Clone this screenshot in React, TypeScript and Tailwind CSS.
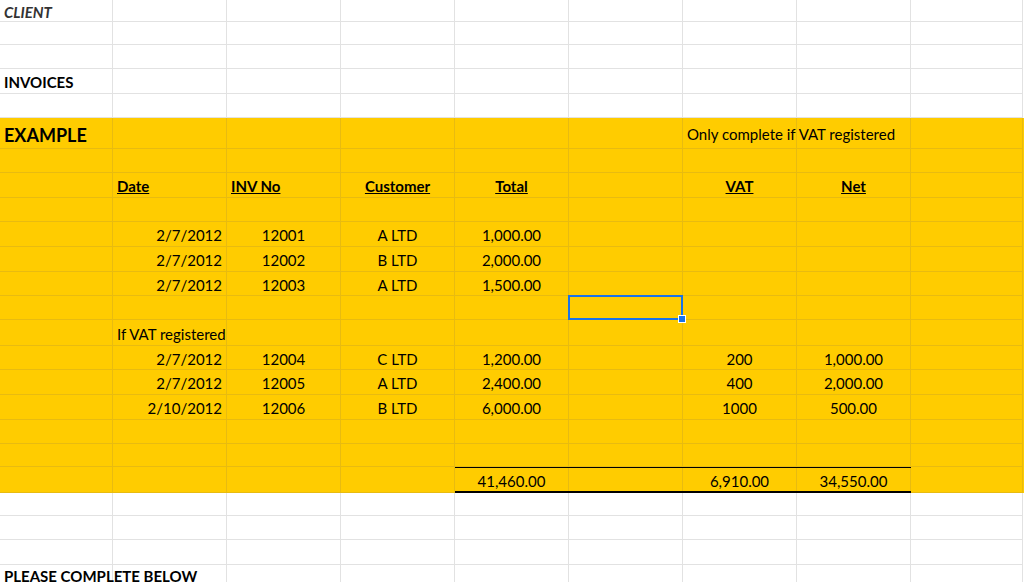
import React from "react";

type Cell = { t?: string; a?: "l" | "c" | "r"; cls?: string };
type Row = { h: number; y?: boolean; cells?: Record<number, Cell>; top?: boolean; bottom?: boolean; sel?: boolean };

const hdr = "font-bold underline";

const rows: Row[] = [
  { h: 22, cells: { 0: { t: "CLIENT", cls: "font-bold italic text-[#333]" } } },
  { h: 23 },
  { h: 24 },
  { h: 25, cells: { 0: { t: "INVOICES", cls: "font-bold" } } },
  { h: 24 },
  { h: 31, y: true, cells: { 0: { t: "EXAMPLE", cls: "font-bold text-[18px]" }, 6: { t: "Only complete if VAT registered" } } },
  { h: 24, y: true },
  { h: 25, y: true, cells: { 1: { t: "Date", cls: hdr }, 2: { t: "INV No", cls: hdr }, 3: { t: "Customer", a: "c", cls: hdr }, 4: { t: "Total", a: "c", cls: hdr }, 6: { t: "VAT", a: "c", cls: hdr }, 7: { t: "Net", a: "c", cls: hdr } } },
  { h: 24, y: true },
  { h: 25, y: true, cells: { 1: { t: "2/7/2012", a: "r" }, 2: { t: "12001", a: "c" }, 3: { t: "A LTD", a: "c" }, 4: { t: "1,000.00", a: "c" } } },
  { h: 25, y: true, cells: { 1: { t: "2/7/2012", a: "r" }, 2: { t: "12002", a: "c" }, 3: { t: "B LTD", a: "c" }, 4: { t: "2,000.00", a: "c" } } },
  { h: 24, y: true, cells: { 1: { t: "2/7/2012", a: "r" }, 2: { t: "12003", a: "c" }, 3: { t: "A LTD", a: "c" }, 4: { t: "1,500.00", a: "c" } } },
  { h: 24, y: true, sel: true },
  { h: 26, y: true, cells: { 1: { t: "If VAT registered" } } },
  { h: 24, y: true, cells: { 1: { t: "2/7/2012", a: "r" }, 2: { t: "12004", a: "c" }, 3: { t: "C LTD", a: "c" }, 4: { t: "1,200.00", a: "c" }, 6: { t: "200", a: "c" }, 7: { t: "1,000.00", a: "c" } } },
  { h: 25, y: true, cells: { 1: { t: "2/7/2012", a: "r" }, 2: { t: "12005", a: "c" }, 3: { t: "A LTD", a: "c" }, 4: { t: "2,400.00", a: "c" }, 6: { t: "400", a: "c" }, 7: { t: "2,000.00", a: "c" } } },
  { h: 25, y: true, cells: { 1: { t: "2/10/2012", a: "r" }, 2: { t: "12006", a: "c" }, 3: { t: "B LTD", a: "c" }, 4: { t: "6,000.00", a: "c" }, 6: { t: "1000", a: "c" }, 7: { t: "500.00", a: "c" } } },
  { h: 24, y: true },
  { h: 23, y: true },
  { h: 26, y: true, top: true, bottom: true, cells: { 4: { t: "41,460.00", a: "c" }, 6: { t: "6,910.00", a: "c" }, 7: { t: "34,550.00", a: "c" } } },
  { h: 23 },
  { h: 24 },
  { h: 25 },
  { h: 20, cells: { 0: { t: "PLEASE COMPLETE BELOW", cls: "font-bold" } } },
];

const widths = [113, 114, 114, 114, 114, 114, 114, 114, 112];

export default function App() {
  return (
    <div className="w-[1024px] h-[582px] overflow-hidden bg-white text-[15px] text-black" style={{ fontFamily: "Lato, 'Open Sans', sans-serif" }}>
      {rows.map((r, i) => (
        <div key={i} className={`flex ${r.y ? "bg-[#ffcc00]" : "bg-white"}`} style={{ height: r.h }}>
          {widths.map((w, c) => {
            const cell = r.cells?.[c];
            const inTotals = c >= 4 && c <= 7;
            const grid = r.y ? "border-[#e8bb10]" : "border-[#e2e2e2]";
            const align = cell?.a === "c" ? "justify-center" : cell?.a === "r" ? "justify-end" : "justify-start";
            return (
              <div
                key={c}
                className={`relative flex items-center px-1 pt-[3px] shrink-0 border-r border-b overflow-visible whitespace-nowrap ${grid} ${align}`}
                style={{ width: w }}
              >
                {r.top && inTotals && <div className="absolute left-0 right-[-1px] top-0 h-px bg-black" />}
                {r.bottom && inTotals && <div className="absolute left-0 right-[-1px] bottom-[-1px] h-[2px] bg-black" />}
                {r.sel && c === 5 && (
                  <div className="absolute inset-[-1px] border-2 border-[#1a73e8] z-20">
                    <div className="absolute right-[-5px] bottom-[-5px] w-[8px] h-[8px] bg-[#1a73e8] border border-white" />
                  </div>
                )}
                {cell?.t && <span className={`leading-none relative z-10 ${cell.cls ?? ""}`}>{cell.t}</span>}
              </div>
            );
          })}
        </div>
      ))}
    </div>
  );
}
